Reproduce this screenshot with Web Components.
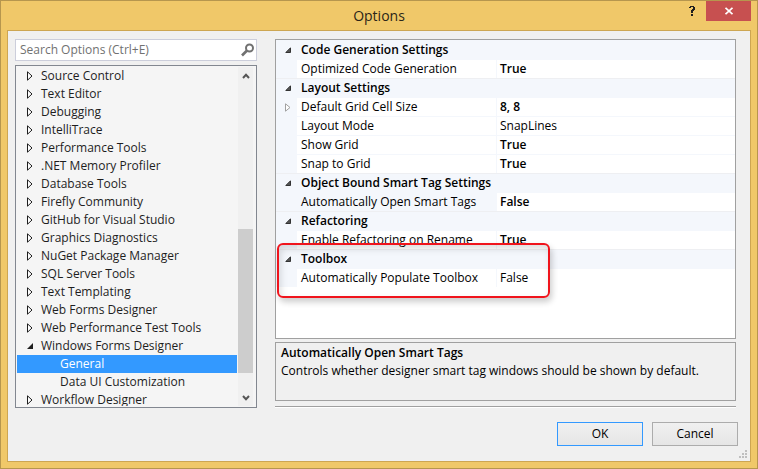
<!DOCTYPE html>
<html lang="en">
<head>
<meta charset="utf-8">
<title>Options</title>
<style>
html, body { margin: 0; height: 100%; }
body { font: 12px/18px "Open Sans", "Noto Sans", sans-serif; color: #1e1e1e; }
</style>
</head>
<body>
<options-window heading="Options">
  <search-box slot="side" hint="Search Options (Ctrl+E)"></search-box>
  <options-tree slot="side"></options-tree>
  <property-grid slot="main"></property-grid>
  <help-pane slot="main" heading="Automatically Open Smart Tags">Controls whether designer smart tag windows should be shown by default.</help-pane>
  <dialog-button slot="actions" primary>OK</dialog-button>
  <dialog-button slot="actions">Cancel</dialog-button>
</options-window>
<script>
const define = (name, render) => customElements.define(name, class extends HTMLElement {
  connectedCallback() {
    if (this.shadowRoot) return;
    const t = document.createElement('template');
    t.innerHTML = '<style>*{box-sizing:border-box}button,input{font:inherit;color:inherit}button{margin:0;padding:0;border:0;background:none}svg{display:block}</style>' + render(this);
    this.attachShadow({ mode: 'open' }).append(t.content.cloneNode(true));
  }
});

define('options-window', el => `
<style>
:host { box-sizing: border-box; display: flex; flex-direction: column; height: 100vh; padding: 0 6px 6px; border: 1px solid #b6964e; background: #f0c869; }
header { display: grid; grid-template-columns: 1fr auto 1fr; height: 29px; flex: none; }
h1 { grid-column: 2; margin: 0; font-size: 14px; font-weight: 400; line-height: 30px; color: #2b2518; }
.caption { justify-self: end; display: flex; height: 20px; gap: 6px; }
.help, .close { display: grid; place-items: center; }
.help { width: 16px; }
.close { width: 45px; background: #c75050; }
main { flex: 1; min-height: 0; display: grid; grid-template-columns: 242px minmax(0, 1fr); grid-template-rows: minmax(0, 1fr) auto; column-gap: 18px; padding: 8px 14px 15px 7px; border: 1px solid #cda652; background: #f0f0f0; position: relative; }
.side { display: flex; flex-direction: column; gap: 4px; min-height: 0; }
.main { display: flex; flex-direction: column; gap: 3px; min-height: 0; }
.rule { height: 2px; margin: 1px 0 0; border: 0; border-top: 1px solid #a0a0a0; background: #fff; flex: none; }
.actions { grid-column: 1 / -1; display: flex; justify-content: flex-end; gap: 9px; padding-top: 14px; margin-right: -2px; }
.grip { position: absolute; right: 3px; bottom: 3px; }
</style>
<header>
  <h1>${el.getAttribute('heading')}</h1>
  <div class="caption">
    <button class="help" aria-label="Help"><svg width="6" height="10" viewBox="0 0 6 10" shape-rendering="crispEdges" fill="#1e1e1e"><path d="M1 0h4v1h1v3h-1v1h-1v2h-2v-3h1v-1h1v-2h-2v1h-2v-1h1zM2 8h2v2h-2z"/></svg></button>
    <button class="close" aria-label="Close"><svg width="8" height="8" viewBox="0 0 8 8"><path d="M.5 .8l7 6.400M7.500 .8l-7 6.400" stroke="#fff" stroke-width="1.800"/></svg></button>
  </div>
</header>
<main>
  <div class="side"><slot name="side"></slot></div>
  <div class="main"><slot name="main"></slot><hr class="rule"></div>
  <div class="actions"><slot name="actions"></slot></div>
  <svg class="grip" width="8" height="8" fill="#bfbfbf" shape-rendering="crispEdges"><path d="M6 0h2v2h-2zM3 3h2v2h-2zM6 3h2v2h-2zM0 6h2v2h-2zM3 6h2v2h-2zM6 6h2v2h-2z"/></svg>
</main>`);

define('search-box', el => `
<style>
:host { display: flex; align-items: center; flex: none; box-sizing: border-box; height: 22px; padding: 0 2px 0 4px; border: 1px solid #cccedb; background: #fff; }
input { flex: 1; min-width: 0; padding: 0; border: 0; outline: 0; background: none; }
input::placeholder { color: #717171; opacity: 1; }
</style>
<input type="text" aria-label="Search options" placeholder="${el.getAttribute('hint')}">
<button aria-label="Search"><svg width="13" height="14" viewBox="0 0 13 14" fill="none" stroke="#717171"><circle cx="8.500" cy="5" r="3.500" stroke-width="2"/><path d="M6 7.500L1 12.500" stroke-width="2.600"/></svg></button>`);

define('options-tree', () => {
  const closed = '<svg width="6" height="10" viewBox="0 0 6 10"><path d="M.5 .8L5 5L.5 9.200z" fill="#fff" stroke="#1e1e1e"/></svg>';
  const open = '<svg width="6" height="6" viewBox="0 0 6 6"><path d="M6 0v6H0z" fill="#1e1e1e"/></svg>';
  const top = ['Source Control', 'Text Editor', 'Debugging', 'IntelliTrace', 'Performance Tools', '.NET Memory Profiler', 'Database Tools', 'Firefly Community', 'GitHub for Visual Studio', 'Graphics Diagnostics', 'NuGet Package Manager', 'SQL Server Tools', 'Text Templating', 'Web Forms Designer', 'Web Performance Test Tools', 'Windows Forms Designer', '>General', '>Data UI Customization', 'Workflow Designer'];
  const row = name => {
    const child = name[0] === '>';
    const label = child ? name.slice(1) : name;
    const isOpen = name === 'Windows Forms Designer';
    return `<li role="none"><button role="treeitem" class="${child ? 'child' : ''}" ${child ? '' : `aria-expanded="${isOpen}"`} aria-selected="${label === 'General'}">${child ? '' : `<span class="mark">${isOpen ? open : closed}</span>`}<span>${label}</span></button></li>`;
  };
  return `
<style>
:host { display: flex; flex: none; height: 343px; min-height: 0; box-sizing: border-box; gap: 1px; padding: 1px; border: 1px solid #828790; background: #f5f5f5; }
ul { flex: 1; min-width: 0; margin: 0; padding: 0; list-style: none; overflow: hidden; }
button { display: flex; align-items: center; width: 100%; height: 18px; padding-left: 10px; text-align: left; white-space: nowrap; }
.mark { width: 14px; }
button.child { padding-left: 43px; }
[aria-selected=true] { background: #3399ff; color: #fff; }
.bar { width: 17px; display: flex; flex-direction: column; align-items: flex-start; background: linear-gradient(90deg, #f0f0f0 15px, #f5f5f5 15px); }
button.step { width: 15px; height: 17px; padding: 0; display: grid; place-items: center; }
.track { flex: 1; width: 15px; margin-bottom: 16px; display: flex; flex-direction: column; justify-content: flex-end; }
.thumb { height: 50%; background: #cdcdcd; }
</style>
<ul role="tree" aria-label="Option pages">${top.map(row).join('')}</ul>
<div class="bar">
  <button class="step" aria-label="Scroll up"><svg width="8" height="6" viewBox="0 0 8 6"><path d="M1 5L4 1.800L7 5" fill="none" stroke="#555" stroke-width="2"/></svg></button>
  <div class="track"><div class="thumb"></div></div>
  <button class="step" aria-label="Scroll down"><svg width="8" height="6" viewBox="0 0 8 6"><path d="M1 1L4 4.200L7 1" fill="none" stroke="#555" stroke-width="2"/></svg></button>
</div>`;
});

define('property-grid', () => {
  const groups = [
    ['Code Generation Settings', [['Optimized Code Generation', 'True', 'b']]],
    ['Layout Settings', [['Default Grid Cell Size', '8, 8', 'b', 'more'], ['Layout Mode', 'SnapLines', ''], ['Show Grid', 'True', 'b'], ['Snap to Grid', 'True', 'b']]],
    ['Object Bound Smart Tag Settings', [['Automatically Open Smart Tags', 'False', 'b sel']]],
    ['Refactoring', [['Enable Refactoring on Rename', 'True', 'b']]],
    ['Toolbox', [['Automatically Populate Toolbox', 'False', '']]]
  ];
  const openMark = '<button aria-label="Collapse" aria-expanded="true"><svg width="6" height="6" viewBox="0 0 6 6"><path d="M5.500 .8v4.700H.8z" fill="#555" stroke="#333"/></svg></button>';
  const closedMark = '<button aria-label="Expand" aria-expanded="false"><svg width="6" height="9" viewBox="0 0 6 9"><path d="M.5 .8L5 4.500L.5 8.200z" fill="#fff" stroke="#a0a0a0"/></svg></button>';
  return `
<style>
:host { display: block; flex: 1; min-height: 0; position: relative; border: 1px solid #a0a0a0; background: #fff; box-sizing: border-box; color: #000; }
table { width: 100%; table-layout: fixed; border-spacing: 0; }
col.m { width: 21px; }
col.n { width: 199px; }
th, td { height: 19px; padding: 0 0 0 4px; line-height: 18px; text-align: left; font-weight: 400; white-space: nowrap; border-top: 1px solid #f4f7fc; }
.m { padding: 0 0 0 9px; background: #f4f7fc; }
.m button { display: block; }
.cat th { font-weight: 600; background: #f4f7fc; }
.cat > * { border-top-color: #eeeff2; }
tbody:first-of-type .cat > * { border-top-color: #f4f7fc; }
td.v { border-left: 1px solid #f4f7fc; padding-left: 3px; }
.b td.v { font-weight: 600; }
.sel th { background: #f4f7fc; }
.callout { position: absolute; left: 1px; top: 203px; width: 273px; height: 55px; border: 2px solid #f0141c; border-radius: 6px; box-shadow: 2px 4px 6px #0003, inset 2px 4px 7px #0002; pointer-events: none; }
</style>
<table aria-label="Properties"><colgroup><col class="m"><col class="n"><col></colgroup>
${groups.map(([g, rows]) => `<tbody><tr class="cat"><td class="m">${openMark}</td><th colspan="2" scope="rowgroup">${g}</th></tr>${rows.map(([n, v, c, more]) => `<tr class="${c}"><td class="m">${more ? closedMark : ''}</td><th scope="row">${n}</th><td class="v">${v}</td></tr>`).join('')}</tbody>`).join('')}
</table>
<div class="callout"></div>`;
});

define('help-pane', el => `
<style>
:host { display: block; flex: none; box-sizing: border-box; height: 59px; margin-bottom: 1px; padding: 1px 5px; border: 1px solid #a0a0a0; color: #000; }
h2, p { margin: 0; font-size: 12px; line-height: 18px; }
h2 { font-weight: 600; }
</style>
<h2>${el.getAttribute('heading')}</h2><p><slot></slot></p>`);

define('dialog-button', el => `
<style>
:host { display: block; width: 86px; color: #000; }
button { width: 100%; height: 24px; border: 1px solid #acacac; background: linear-gradient(#f0f0f0, #e5e5e5); }
:host([primary]) button { border-color: #3399ff; }
</style>
<button type="button"><slot></slot></button>`);
</script>
</body>
</html>
